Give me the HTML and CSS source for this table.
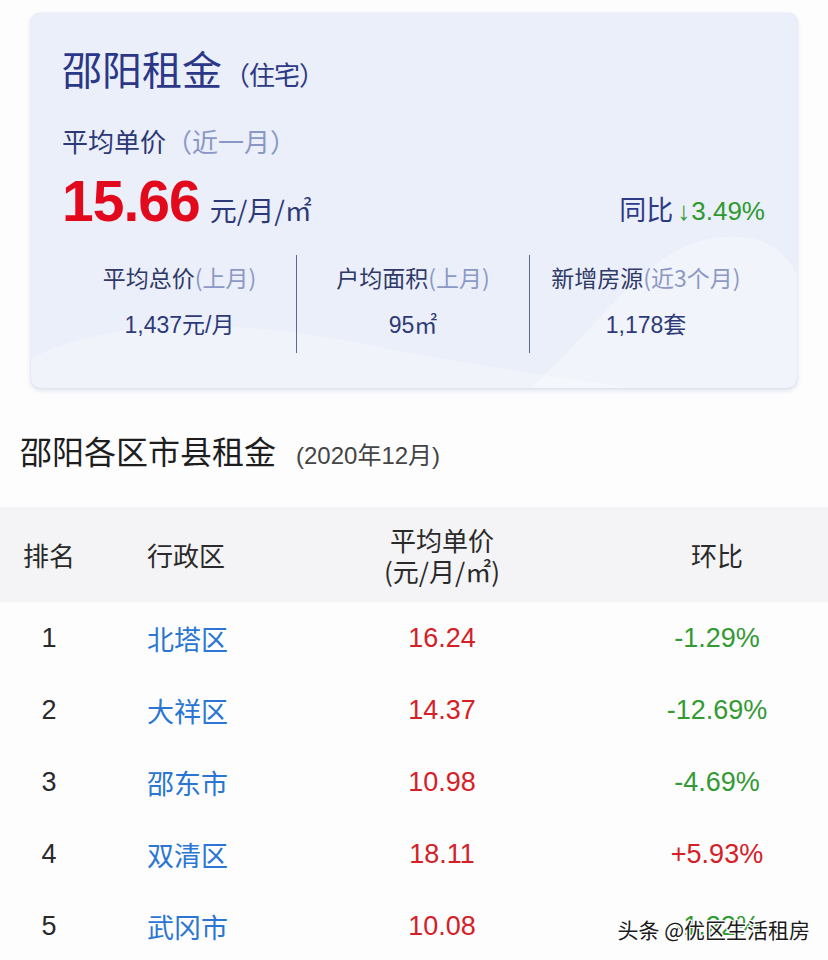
FILE: index.html
```html
<!DOCTYPE html>
<html lang="zh-CN">
<head>
<meta charset="utf-8">
<title>邵阳租金</title>
<link rel="stylesheet" href="styles.css">
</head>
<body>
<div class="page">
  <section class="card">
    <svg class="card-deco" viewBox="0 0 766 375" preserveAspectRatio="none" aria-hidden="true">
      <path d="M500 375 C580 300 620 230 690 224 C735 220 755 240 766 262 L766 375 Z" fill="#ffffff" fill-opacity="0.3"/>
      <path d="M0 345 C80 305 200 305 330 330 C420 350 520 362 600 375 L0 375 Z" fill="#ffffff" fill-opacity="0.25"/>
    </svg>
    <h1 class="card-title">邵阳租金<span class="card-sub">（住宅）</span></h1>
    <div class="avg-label">平均单价<span class="avg-note">（近一月）</span></div>
    <div class="price-row">
      <div class="price"><span class="price-num">15.66</span><span class="price-unit">元/月/㎡</span></div>
      <div class="yoy">同比<span class="yoy-val"><span class="yoy-arrow">↓</span>3.49%</span></div>
    </div>
    <div class="stats">
      <div class="stat">
        <div class="stat-label">平均总价<span class="stat-note">(上月)</span></div>
        <div class="stat-value">1,437元/月</div>
      </div>
      <div class="stat">
        <div class="stat-label">户均面积<span class="stat-note">(上月)</span></div>
        <div class="stat-value">95㎡</div>
      </div>
      <div class="stat">
        <div class="stat-label">新增房源<span class="stat-note">(近3个月)</span></div>
        <div class="stat-value">1,178套</div>
      </div>
    </div>
  </section>

  <h2 class="section-title">邵阳各区市县租金<span class="section-date">(2020年12月)</span></h2>

  <div class="table">
    <div class="row head">
      <div class="c-rank">排名</div>
      <div class="c-dist">行政区</div>
      <div class="c-price">平均单价<br>(元/月/㎡)</div>
      <div class="c-chg">环比</div>
    </div>
    <div class="row">
      <div class="c-rank">1</div>
      <div class="c-dist link">北塔区</div>
      <div class="c-price red">16.24</div>
      <div class="c-chg green">-1.29%</div>
    </div>
    <div class="row">
      <div class="c-rank">2</div>
      <div class="c-dist link">大祥区</div>
      <div class="c-price red">14.37</div>
      <div class="c-chg green">-12.69%</div>
    </div>
    <div class="row">
      <div class="c-rank">3</div>
      <div class="c-dist link">邵东市</div>
      <div class="c-price red">10.98</div>
      <div class="c-chg green">-4.69%</div>
    </div>
    <div class="row">
      <div class="c-rank">4</div>
      <div class="c-dist link">双清区</div>
      <div class="c-price red">18.11</div>
      <div class="c-chg red">+5.93%</div>
    </div>
    <div class="row">
      <div class="c-rank">5</div>
      <div class="c-dist link">武冈市</div>
      <div class="c-price red">10.08</div>
      <div class="c-chg green">-1.22%</div>
    </div>
  </div>

  <div class="watermark">头条 @优区生活租房</div>
</div>
</body>
</html>
```

FILE: styles.css
```css
* { box-sizing: border-box; }

html, body {
  margin: 0;
  padding: 0;
  background: #fdfdfe;
}

body {
  font-family: "Liberation Sans", "Noto Sans CJK SC", sans-serif;
  color: #222;
}

.page {
  position: relative;
  width: 828px;
  height: 960px;
  overflow: hidden;
  padding-top: 13px;
}

/* ---------- card ---------- */
.card {
  position: relative;
  margin: 0 31px 0 31px;
  width: 766px;
  height: 375px;
  padding: 31px 32px 0 31px;
  background: #ebeff9;
  border-radius: 9px;
  box-shadow: 0 2px 5px rgba(90, 110, 170, 0.22), 0 0 1px rgba(90, 110, 170, 0.25);
  overflow: hidden;
}

.card-deco {
  position: absolute;
  left: 0;
  top: 0;
  width: 100%;
  height: 100%;
}

.card-title,
.avg-label,
.price-row,
.stats {
  position: relative;
}

.card-title {
  margin: 0;
  font-size: 40px;
  line-height: 48px;
  font-weight: 400;
  color: #2b3788;
  font-family: "Noto Sans CJK SC", sans-serif;
}

.card-sub {
  font-size: 26px;
  margin-left: 2px;
  letter-spacing: -1px;
  color: #2d3a86;
}

.avg-label {
  margin-top: 25px;
  font-size: 26px;
  line-height: 36px;
  color: #2d3877;
  font-family: "Noto Sans CJK SC", sans-serif;
}

.avg-note {
  color: #8a97c6;
}

.price-row {
  margin-top: 10px;
  display: flex;
  justify-content: space-between;
  align-items: baseline;
  height: 64px;
}

.price-num {
  font-family: "Liberation Sans", sans-serif;
  font-weight: 700;
  font-size: 57px;
  line-height: 64px;
  color: #e1091b;
  letter-spacing: -1px;
}

.price-unit {
  font-size: 27px;
  color: #2d3877;
  margin-left: 10px;
  font-family: "Noto Sans CJK SC", sans-serif;
}

.yoy {
  font-size: 27px;
  color: #2d3a88;
  font-family: "Noto Sans CJK SC", sans-serif;
  position: relative;
  top: -1px;
}

.yoy-val {
  font-family: "Liberation Sans", sans-serif;
  color: #2f9a2f;
  font-size: 26px;
}

.yoy-arrow {
  font-size: 26px;
  margin: 0 1px 0 4px;
}

.stats {
  margin-top: 22px;
  display: grid;
  grid-template-columns: 233px 233px 233px;
  margin-left: 1px;
}

.stat {
  text-align: center;
  padding: 6px 0 12px;
  font-family: "Noto Sans CJK SC", sans-serif;
}

.stat + .stat {
  border-left: 1px solid #5c6890;
}

.stat-label {
  font-size: 23px;
  line-height: 32px;
  color: #303a68;
}

.stat-note {
  color: #8d99c4;
}

.stat-value {
  margin-top: 16px;
  font-size: 23px;
  line-height: 32px;
  color: #2e3a78;
  font-family: "Liberation Sans", "Noto Sans CJK SC", sans-serif;
}

/* ---------- section ---------- */
.section-title {
  margin: 40px 0 0 20px;
  font-size: 32px;
  line-height: 44px;
  font-weight: 400;
  color: #1e1e1e;
  font-family: "Noto Sans CJK SC", sans-serif;
}

.section-date {
  font-family: "Liberation Sans", "Noto Sans CJK SC", sans-serif;
  font-size: 24px;
  color: #444;
  margin-left: 20px;
}

/* ---------- table ---------- */
.table {
  margin-top: 29px;
}

.row {
  display: grid;
  grid-template-columns: 56px 275px 180px 275px;
  padding-left: 21px;
  height: 72px;
  align-items: center;
  font-size: 27px;
  color: #2a2a2a;
}

.row.head {
  height: 95px;
  background: #f4f4f6;
  font-family: "Noto Sans CJK SC", sans-serif;
  font-size: 26px;
  color: #2a2a2a;
}

.row.head .c-price {
  line-height: 31px;
}

.c-rank {
  text-align: center;
}

.c-dist {
  padding-left: 70px;
  font-family: "Noto Sans CJK SC", sans-serif;
}

.c-price {
  text-align: center;
}

.c-chg {
  text-align: center;
  padding-left: 95px;
}

.link {
  color: #2a76d2;
}

.red {
  color: #d52027;
}

.green {
  color: #349a34;
}

.watermark {
  position: absolute;
  right: 18px;
  top: 913px;
  font-family: "Noto Sans CJK SC", sans-serif;
  font-size: 21px;
  line-height: 32px;
  color: #1a1a1a;
  text-shadow: 1px 0 0 #fff, -1px 0 0 #fff, 0 1px 0 #fff, 0 -1px 0 #fff,
    1px 1px 0 #fff, -1px -1px 0 #fff, 1px -1px 0 #fff, -1px 1px 0 #fff;
}
```
